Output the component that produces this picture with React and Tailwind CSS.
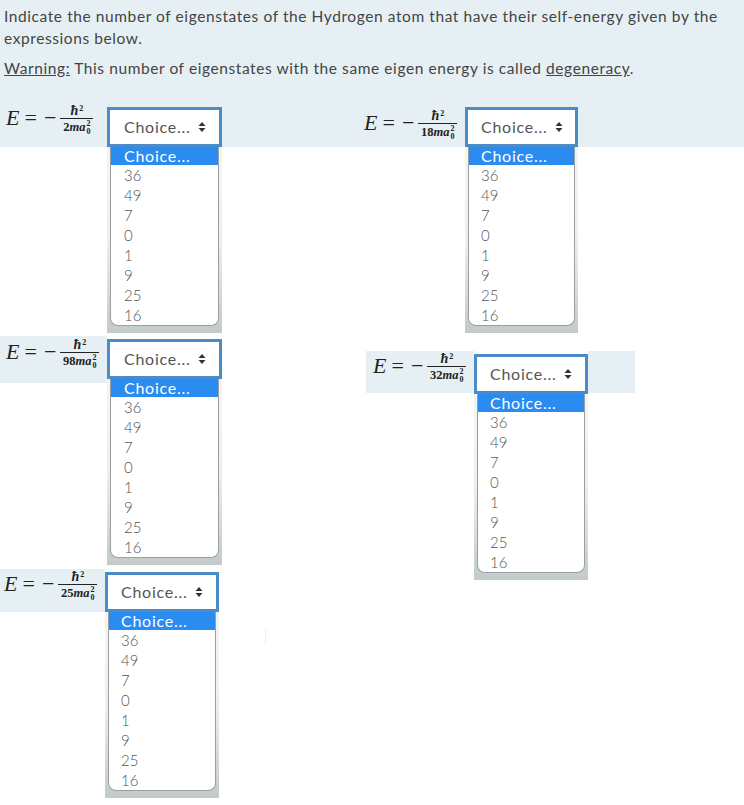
const options = ["36", "49", "7", "0", "1", "9", "25", "16"];

function Fraction({ coef, lineWidth }) {
  return (
    <div className={`flex flex-col items-center font-['Liberation_Serif',serif] ${lineWidth}`}>
      <div className="h-[15px] font-bold italic text-[14px] leading-[16px] text-[#222]">
        ħ<sup className="not-italic text-[8px] ml-px">2</sup>
      </div>
      <div className="w-full h-px bg-[#222]" />
      <div className="flex items-start h-[17px] font-bold text-[12.5px] leading-[17px] text-[#222]">
        <span>{coef}</span>
        <span className="italic">ma</span>
        <span className="flex flex-col text-[8px] leading-[8px] mt-px ml-px">
          <span>2</span>
          <span>0</span>
        </span>
      </div>
    </div>
  );
}

function Equation({ coef, lineWidth, className }) {
  return (
    <div className={`flex items-start shrink-0 text-[#222] font-['Liberation_Serif',serif] ${className}`}>
      <div className="flex items-center h-[28px] text-[22px] gap-[5px] mr-[4px]">
        <span className="italic">E</span>
        <span>=</span>
        <span className="ml-[2px]">−</span>
      </div>
      <Fraction coef={coef} lineWidth={lineWidth} />
    </div>
  );
}

function ChoiceSelect({ className, textPad = "pl-[14px]", listPad = "pl-[13px]" }) {
  return (
    <div className={`shrink-0 font-['Lato',sans-serif] text-[15px] ${className}`}>
      <div className={`relative z-10 h-[40px] flex items-center gap-[7px] border-[3px] border-[#4a8bc8] bg-white text-[#555] ${textPad}`}>
        <span className="text-[16px] tracking-[0.75px]">Choice...</span>
        <svg width="8" height="10" viewBox="0 0 8 10" className="fill-[#333]">
          <path d="M4 0 L7.5 4 H0.5 Z M4 10 L7.5 6 H0.5 Z" />
        </svg>
      </div>
      <div className="px-[3px] pb-[7px] bg-linear-to-b from-[#f3f5f5] via-[#eceff0] to-[#c3caca]">
        <ul className="h-[179px] bg-white border-x border-b border-[#9a9fa3] rounded-b-[8px] overflow-hidden text-[#555] font-light">
          <li className={`h-[18px] bg-[#2a8bf0] text-white font-normal text-[16px] leading-[18px] tracking-[0.75px] ${listPad}`}>
            Choice...
          </li>
          {options.map((o) => (
            <li key={o} className={`h-[20px] leading-[20px] ${listPad}`}>
              {o}
            </li>
          ))}
        </ul>
      </div>
    </div>
  );
}

export default function App() {
  return (
    <div className="w-[744px] h-[805px] bg-white overflow-hidden">
      <div className="h-[147px] bg-[#e6f0f4] px-[4px] pt-[5px] font-['Lato',sans-serif] text-[15.5px] leading-[22px] text-[#444] tracking-[0.58px]">
        <p>Indicate the number of eigenstates of the Hydrogen atom that have their self-energy given by the expressions below.</p>
        <p className="mt-2">
          <u>Warning:</u> This number of eigenstates with the same eigen energy is called <u>degeneracy</u>.
        </p>
      </div>

      <div className="flex -mt-[44px]">
        <div className="w-[357px] shrink-0 flex flex-col">
          <div className="flex items-start">
            <Equation coef="2" lineWidth="w-[33px]" className="w-[107px] pl-[6px]" />
            <ChoiceSelect className="w-[115px] mt-[4px]" />
          </div>
          <div className="flex items-start mt-[3px]">
            <Equation coef="98" lineWidth="w-[39px]" className="w-[107px] h-[47px] pl-[6px] pt-px bg-[#e6f0f4]" />
            <ChoiceSelect className="w-[115px] mt-[3px]" />
          </div>
          <div className="flex items-start mt-[4px]">
            <Equation coef="25" lineWidth="w-[39px]" className="w-[105px] h-[43px] pl-[4px] bg-[#e6f0f4]" />
            <ChoiceSelect className="w-[114px] mt-[3px]" textPad="pl-[13px]" listPad="pl-[12px]" />
            <div className="w-px h-[15px] ml-[46px] mt-[60px] bg-[#eeeeee]" />
          </div>
        </div>

        <div className="flex flex-col pl-[7px]">
          <div className="flex items-start">
            <Equation coef="18" lineWidth="w-[39px]" className="w-[101px] pt-[5px]" />
            <ChoiceSelect className="w-[113px] mt-[4px]" textPad="pl-[13px]" listPad="pl-[12px]" />
          </div>
          <div className="flex items-start ml-[2px] mt-[18px]">
            <Equation coef="32" lineWidth="w-[39px]" className="w-[108px] h-[42px] pl-[7px] bg-[#e6f0f4]" />
            <ChoiceSelect className="w-[114px] mt-[3px]" textPad="pl-[13px]" listPad="pl-[12px]" />
            <div className="w-[47px] h-[42px] bg-[#e6f0f4]" />
          </div>
        </div>
      </div>
    </div>
  );
}
